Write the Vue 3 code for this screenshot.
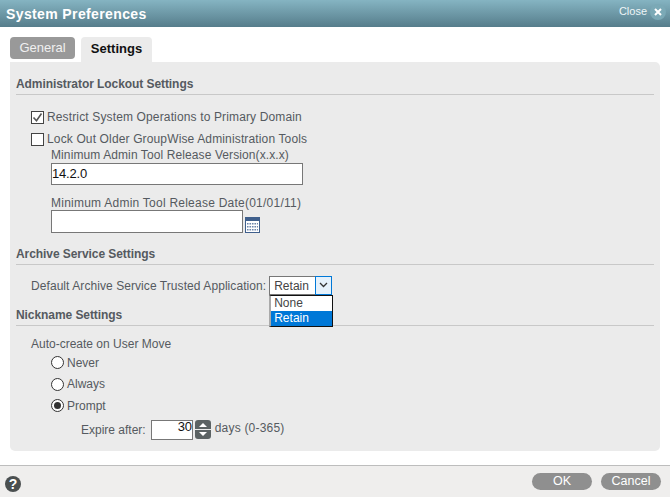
<script setup>
const radios = [
  { label: 'Never', checked: false },
  { label: 'Always', checked: false },
  { label: 'Prompt', checked: true },
]
</script>

<template>
  <div class="dialog">
    <header class="titlebar">
      <h1 class="title">System Preferences</h1>
      <div class="close">
        <span class="close-text">Close</span>
        <span class="close-x">
          <svg width="16" height="16" viewBox="0 0 16 16"><path d="M5 5l6 6M11 5l-6 6" stroke="#fff" stroke-width="2" fill="none"/></svg>
        </span>
      </div>
    </header>

    <main class="body">
      <div class="tabs">
        <div class="tab">General</div>
        <div class="tab active">Settings</div>
      </div>
      <div class="panel">
        <h2 class="section first">Administrator Lockout Settings</h2>
        <div class="check-row r1">
          <span class="check">
            <svg width="13" height="13" viewBox="0 0 13 13"><path d="M2.5 6.5l3 3.2 5-7.2" stroke="#555" stroke-width="1.6" fill="none"/></svg>
          </span>
          <span>Restrict System Operations to Primary Domain</span>
        </div>
        <div class="check-row r2">
          <span class="check"></span>
          <span>Lock Out Older GroupWise Administration Tools</span>
        </div>
        <div class="fields">
          <div class="label version-label">Minimum Admin Tool Release Version(x.x.x)</div>
          <div class="input version">14.2.0</div>
          <div class="label date-label">Minimum Admin Tool Release Date(01/01/11)</div>
          <div class="date-row">
            <div class="input date"></div>
            <svg class="cal" width="15" height="16" viewBox="0 0 15 16">
              <rect x="0.5" y="0.5" width="14" height="15" fill="#fff" stroke="#3f5f8c"/>
              <rect x="1" y="1" width="13" height="3" fill="#3f5f8c"/>
              <path d="M2 6h11v1.4H2zM2 9h11v1.4H2zM2 12h11v1.4H2z" fill="#6d86ab"/>
              <path d="M4 5v9.5M6.5 5v9.5M9 5v9.5M11.5 5v9.5" stroke="#fff" stroke-width="0.9"/>
            </svg>
          </div>
        </div>

        <h2 class="section archive">Archive Service Settings</h2>
        <div class="select-row">
          <span class="select-label">Default Archive Service Trusted Application:</span>
          <div class="select">
            <span class="select-value">Retain</span>
            <span class="select-btn">
              <svg width="9" height="6" viewBox="0 0 9 6"><path d="M1 1l3.5 3.5L8 1" stroke="#333" stroke-width="1.3" fill="none"/></svg>
            </span>
            <div class="dropdown">
              <div class="option">None</div>
              <div class="option selected">Retain</div>
            </div>
          </div>
        </div>

        <h2 class="section nickname">Nickname Settings</h2>
        <div class="auto">Auto-create on User Move</div>
        <div class="radios">
          <div v-for="r in radios" :key="r.label" class="radio-row">
            <span class="radio" :class="{ on: r.checked }"></span>
            <span>{{ r.label }}</span>
          </div>
        </div>
        <div class="expire">
          <span class="expire-label">Expire after:</span>
          <div class="input num">30</div>
          <div class="spinner">
            <svg width="16" height="19" viewBox="0 0 16 19">
              <path d="M3 0h10a3 3 0 0 1 3 3v6H0V3a3 3 0 0 1 3-3zM0 10h16v6a3 3 0 0 1-3 3H3a3 3 0 0 1-3-3z" fill="#5b6263"/>
              <path d="M8 3l4 4H4zM8 16l-4-4h8z" fill="#fff"/>
            </svg>
          </div>
          <span class="days">days (0-365)</span>
        </div>
      </div>
    </main>

    <footer class="footer">
      <span class="help">?</span>
      <div class="buttons">
        <button class="btn ok">OK</button>
        <button class="btn">Cancel</button>
      </div>
    </footer>
  </div>
</template>

<style>
html, body { margin: 0; padding: 0; background: #fff; }
</style>

<style scoped>
.dialog {
  width: 670px;
  height: 497px;
  display: flex;
  flex-direction: column;
  font-family: "Liberation Sans", Arial, sans-serif;
  font-size: 12px;
  color: #555a60;
  background: #fff;
  overflow: hidden;
}
.titlebar {
  height: 27px;
  flex: none;
  display: flex;
  justify-content: space-between;
  background: linear-gradient(#85b4c2, #567d8b);
  color: #fff;
}
.title {
  margin: 0;
  padding-left: 6px;
  font-size: 14px;
  line-height: 28px;
  font-weight: bold;
  letter-spacing: 0.38px;
}
.close {
  display: flex;
  align-items: flex-start;
  padding: 4px 4px 0 0;
  color: #eef5f7;
}
.close-text {
  font-size: 11px;
  line-height: 15px;
}
.close-x {
  width: 16px;
  height: 16px;
  margin-left: 3px;
  border-radius: 50%;
  background: #7ba9b6;
  display: block;
}
.close-x svg { display: block; }
.body {
  flex: 1;
  padding: 10px 10px 0;
}
.tabs {
  display: flex;
  align-items: flex-start;
  gap: 6px;
  height: 25px;
}
.tab {
  width: 65px;
  height: 22px;
  line-height: 22px;
  text-align: center;
  font-size: 13px;
  color: #f0f0f0;
  background: #999;
  border-radius: 4px;
}
.tab.active {
  width: 71px;
  height: 25px;
  background: #ebebeb;
  color: #111;
  font-weight: bold;
  border-radius: 4px 4px 0 0;
  line-height: 23px;
}
.panel {
  height: 389px;
  box-sizing: border-box;
  background: #ebebeb;
  border-radius: 0 5px 5px 5px;
  padding: 0 6px;
}
.section {
  margin: 0;
  font-size: 12px;
  font-weight: bold;
  color: #555a60;
  line-height: 14px;
  border-bottom: 1px solid #c8c8c8;
  padding-bottom: 3px;
  letter-spacing: -0.07px;
}
.section.first { padding-top: 15px; }
.check-row {
  display: flex;
  align-items: center;
  height: 14px;
  padding-left: 15px;
  gap: 3px;
  letter-spacing: 0.14px;
}
.r1 { margin-top: 15px; }
.r2 { margin-top: 8px; }
.check {
  box-sizing: content-box;
  width: 11px;
  height: 11px;
  border: 1px solid #444;
  background: #fff;
  display: block;
  flex: none;
  overflow: hidden;
}
.check svg { display: block; margin: -1px; }
.fields { padding-left: 35px; }
.label { line-height: 14px; margin-top: 2px; }
.version-label { letter-spacing: 0.1px; }
.input {
  box-sizing: border-box;
  border: 1px solid #777;
  background: #fff;
  color: #111;
  height: 22px;
  font-size: 13px;
  line-height: 20px;
  padding-left: 0;
  letter-spacing: -0.2px;
}
.version { width: 252px; margin-top: 1px; }
.date-label { margin-top: 11px; letter-spacing: 0.24px; }
.date-row {
  display: flex;
  align-items: flex-end;
  gap: 2px;
  margin-top: 0;
}
.date { width: 192px; height: 23px; }
.cal { display: block; }
.section.archive { margin-top: 14px; }
.select-row {
  display: flex;
  align-items: center;
  padding-left: 15px;
  margin-top: 11px;
  height: 18px;
}
.select-label {
  letter-spacing: 0.07px;
  margin-top: 2px;
}
.select {
  position: relative;
  display: flex;
  width: 63px;
  height: 19px;
  margin-left: 3px;
  flex: none;
}
.select-value {
  box-sizing: border-box;
  width: 46px;
  border: 1px solid #777;
  border-right: none;
  background: #fff;
  padding-left: 4px;
  line-height: 18px;
  color: #444;
}
.select-btn {
  box-sizing: border-box;
  width: 17px;
  border: 1px solid #0078d7;
  background: #e5f1fb;
  display: flex;
  align-items: center;
  justify-content: center;
}
.dropdown {
  position: absolute;
  left: 0;
  top: 19px;
  width: 64px;
  box-sizing: border-box;
  background: #fff;
  border: 1px solid #111;
  border-left: 2px solid #aaa;
  z-index: 2;
}
.option {
  height: 15px;
  line-height: 15px;
  padding-left: 3px;
  color: #444;
}
.option.selected {
  background: #0078d7;
  color: #fff;
}
.section.nickname { margin-top: 14px; }
.auto {
  padding-left: 15px;
  line-height: 14px;
  margin-top: 11px;
}
.radios { padding-left: 35px; margin-top: 4px; }
.radio-row {
  display: flex;
  align-items: center;
  gap: 3px;
  height: 15px;
  margin-bottom: 6.5px;
}
.radio {
  box-sizing: border-box;
  width: 13px;
  height: 13px;
  border: 1px solid #333;
  border-radius: 50%;
  background: #fff;
  flex: none;
  display: flex;
  align-items: center;
  justify-content: center;
}
.radio.on::after {
  content: "";
  width: 7px;
  height: 7px;
  border-radius: 50%;
  background: #333;
}
.expire {
  display: flex;
  align-items: center;
  padding-left: 65px;
  margin-top: 0;
  height: 20px;
}
.expire-label { margin-right: 5px; }
.num {
  width: 42px;
  height: 20px;
  line-height: 12px;
  text-align: right;
  padding: 0;
  flex: none;
}
.spinner { margin: 0 0 0 2px; height: 19px; }
.spinner svg { display: block; }
.days { margin-left: 4px; margin-top: -3px; letter-spacing: 0.2px; }
.footer {
  height: 31px;
  flex: none;
  border-top: 1px solid #bdbdbd;
  background: #efeeed;
  display: flex;
  align-items: center;
  justify-content: space-between;
  padding: 0 9px 0 5px;
}
.help {
  width: 16px;
  height: 16px;
  margin-top: 4px;
  border-radius: 50%;
  background: #4a4f50;
  color: #fff;
  font-weight: bold;
  font-size: 14px;
  line-height: 16px;
  text-align: center;
}
.buttons { display: flex; gap: 9px; }
.btn {
  width: 60px;
  height: 17px;
  border: none;
  border-radius: 9px;
  padding: 0;
  background: #8f8f8f;
  color: #fff;
  font-family: inherit;
  font-size: 12.5px;
  line-height: 17px;
}
</style>
